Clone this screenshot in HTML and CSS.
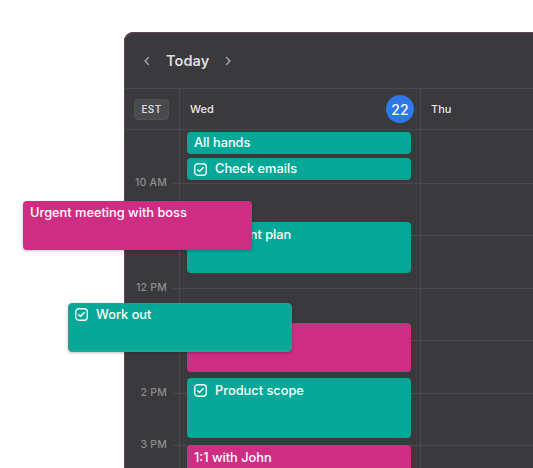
FILE: index.html
```html
<!DOCTYPE html>
<html>
<head>
<meta charset="utf-8">
<link rel="stylesheet" href="styles.css">
</head>
<body>
<div class="page">
  <div class="window">
    <div class="toolbar">
      <span class="chev">
        <svg width="8" height="10" viewBox="0 0 8 10"><path d="M5.5 1.5 L2 5 L5.5 8.5" fill="none" stroke="#a9a8ab" stroke-width="1.4" stroke-linecap="round" stroke-linejoin="round"/></svg>
      </span>
      <span class="today">Today</span>
      <span class="chev">
        <svg width="8" height="10" viewBox="0 0 8 10"><path d="M2.5 1.5 L6 5 L2.5 8.5" fill="none" stroke="#a9a8ab" stroke-width="1.4" stroke-linecap="round" stroke-linejoin="round"/></svg>
      </span>
    </div>
    <div class="header">
      <div class="gutter-head"><span class="tz">EST</span></div>
      <div class="day-head wed"><span>Wed</span><span class="date">22</span></div>
      <div class="day-head"><span>Thu</span></div>
    </div>
    <div class="grid">
      <div class="gutter">
        <div class="hour"></div>
        <div class="hour"><span class="label">10 AM</span></div>
        <div class="hour"><span class="label">11 AM</span></div>
        <div class="hour"><span class="label">12 PM</span></div>
        <div class="hour"><span class="label">1 PM</span></div>
        <div class="hour"><span class="label">2 PM</span></div>
        <div class="hour"><span class="label">3 PM</span></div>
      </div>
      <div class="day wed-col">
        <div class="slot"></div><div class="slot"></div><div class="slot"></div><div class="slot"></div><div class="slot"></div><div class="slot"></div><div class="slot"></div>
        <div class="event teal" style="top:2px;height:22px"><span class="title">All hands</span></div>
        <div class="event teal" style="top:28px;height:22px"><span class="check"><svg width="13" height="13" viewBox="0 0 13 13"><rect x="0.75" y="0.75" width="11.5" height="11.5" rx="3" fill="none" stroke="#fff" stroke-width="1.3"/><path d="M3.6 6.7 L5.5 8.5 L9.3 4.5" fill="none" stroke="#fff" stroke-width="1.3" stroke-linecap="round" stroke-linejoin="round"/></svg></span><span class="title">Check emails</span></div>
        <div class="event teal tall" style="top:92px;height:51px"><span class="title">Investment plan</span></div>
        <div class="event pink tall" style="top:193px;height:49px"><span class="title">Team sync</span></div>
        <div class="event teal tall" style="top:248px;height:60px"><span class="check"><svg width="13" height="13" viewBox="0 0 13 13"><rect x="0.75" y="0.75" width="11.5" height="11.5" rx="3" fill="none" stroke="#fff" stroke-width="1.3"/><path d="M3.6 6.7 L5.5 8.5 L9.3 4.5" fill="none" stroke="#fff" stroke-width="1.3" stroke-linecap="round" stroke-linejoin="round"/></svg></span><span class="title">Product scope</span></div>
        <div class="event pink tall" style="top:315px;height:50px"><span class="title">1:1 with John</span></div>
      </div>
      <div class="day">
        <div class="slot"></div><div class="slot"></div><div class="slot"></div><div class="slot"></div><div class="slot"></div><div class="slot"></div><div class="slot"></div>
      </div>
    </div>
  </div>

  <div class="float pink urgent"><span class="title">Urgent meeting with boss</span></div>
  <div class="float teal workout"><span class="check"><svg width="13" height="13" viewBox="0 0 13 13"><rect x="0.75" y="0.75" width="11.5" height="11.5" rx="3" fill="none" stroke="#fff" stroke-width="1.3"/><path d="M3.6 6.7 L5.5 8.5 L9.3 4.5" fill="none" stroke="#fff" stroke-width="1.3" stroke-linecap="round" stroke-linejoin="round"/></svg></span><span class="title">Work out</span></div>
</div>
</body>
</html>
```
FILE: styles.css
```css
html, body {
  margin: 0;
  padding: 0;
  background: #ffffff;
  overflow: hidden;
  width: 533px;
  height: 468px;
}
.page {
  position: relative;
  width: 533px;
  height: 468px;
  overflow: hidden;
  font-family: Inter, "Noto Sans", sans-serif;
}
.window {
  margin: 32px 0 0 124px;
  width: 430px;
  height: 500px;
  background: #3a393c;
  border-top-left-radius: 9px;
  box-shadow: inset 1px 1px 0 #5b4657;
  display: flex;
  flex-direction: column;
  color: #e6e6e7;
}
.toolbar {
  flex-shrink: 0;
  height: 57px;
  display: flex;
  align-items: center;
  padding-left: 19px;
  padding-top: 1px;
  border-bottom: 1px solid #4a494c;
  box-sizing: border-box;
}
.chev {
  display: flex;
  align-items: center;
  width: 8px;
}
.today {
  font-size: 14.5px;
  font-weight: 600;
  color: #dedddf;
  margin: 0 15px 0 15px;
  letter-spacing: 0.1px;
}
.header {
  flex-shrink: 0;
  height: 40px;
  display: grid;
  grid-template-columns: 56px 241px 1fr;
  border-bottom: 1px solid #4a494c;
}
.gutter-head {
  display: flex;
  align-items: center;
  padding-left: 10px;
  border-right: 1px solid #4a494c;
}
.tz {
  width: 35px;
  height: 21px;
  box-sizing: border-box;
  background: #4a494c;
  border: 1px solid #525154;
  border-radius: 4px;
  display: flex;
  align-items: center;
  justify-content: center;
  font-size: 10px;
  font-weight: 600;
  color: #d8d8da;
  letter-spacing: 0.3px;
}
.day-head {
  display: flex;
  align-items: center;
  justify-content: space-between;
  padding: 0 6px 0 10px;
  font-size: 11px;
  font-weight: 500;
  color: #e8e8e9;
}
.day-head.wed {
  border-right: 1px solid #4a494c;
}
.date {
  width: 28px;
  height: 28px;
  border-radius: 50%;
  background: #2d78e6;
  color: #fff;
  font-size: 14px;
  font-weight: 500;
  display: flex;
  align-items: center;
  justify-content: center;
}
.grid {
  flex-shrink: 0;
  display: grid;
  grid-template-columns: 56px 241px 1fr;
}
.gutter {
  border-right: 1px solid #4a494c;
}
.hour {
  height: 52.5px;
  position: relative;
}
.label {
  position: absolute;
  right: 12px;
  top: -7px;
  font-size: 10.5px;
  font-weight: 500;
  color: #8e8d90;
  letter-spacing: 0.2px;
  line-height: 14px;
}
.hour + .hour::after {
  content: "";
  position: absolute;
  top: 0;
  right: 0;
  width: 6px;
  height: 1px;
  background: #4a494c;
}
.day {
  position: relative;
  border-right: 1px solid #4a494c;
}
.slot {
  height: 52.5px;
  box-sizing: border-box;
}
.slot + .slot {
  border-top: 1px solid #4a494c;
}
.event {
  position: absolute;
  left: 7px;
  right: 9px;
  border-radius: 4px;
  box-sizing: border-box;
  display: flex;
  align-items: center;
  padding: 0 7px;
  font-size: 12.8px;
  font-weight: 500;
  color: #fff;
}
.event.tall {
  align-items: flex-start;
  padding-top: 4px;
}
.teal {
  background: #05a796;
}
.pink {
  background: #cf2c84;
}
.check {
  display: flex;
  width: 13px;
  height: 13px;
  margin-right: 8px;
  margin-top: 1px;
}
.event.tall .check {
  margin-top: 2px;
}
.title {
  line-height: 18px;
  white-space: nowrap;
}
.float {
  position: absolute;
  border-radius: 4px;
  box-sizing: border-box;
  display: flex;
  align-items: flex-start;
  padding: 3px 7px;
  font-size: 12.8px;
  font-weight: 500;
  color: #fff;
  box-shadow: 0 1px 3px rgba(0, 0, 0, 0.25);
}
.urgent {
  left: 23px;
  top: 201px;
  width: 229px;
  height: 49px;
}
.workout {
  left: 68px;
  top: 303px;
  width: 224px;
  height: 49px;
  border: 1px solid #4f8f88;
  padding: 2px 6px;
}
.workout .check {
  margin-top: 2px;
}
```
